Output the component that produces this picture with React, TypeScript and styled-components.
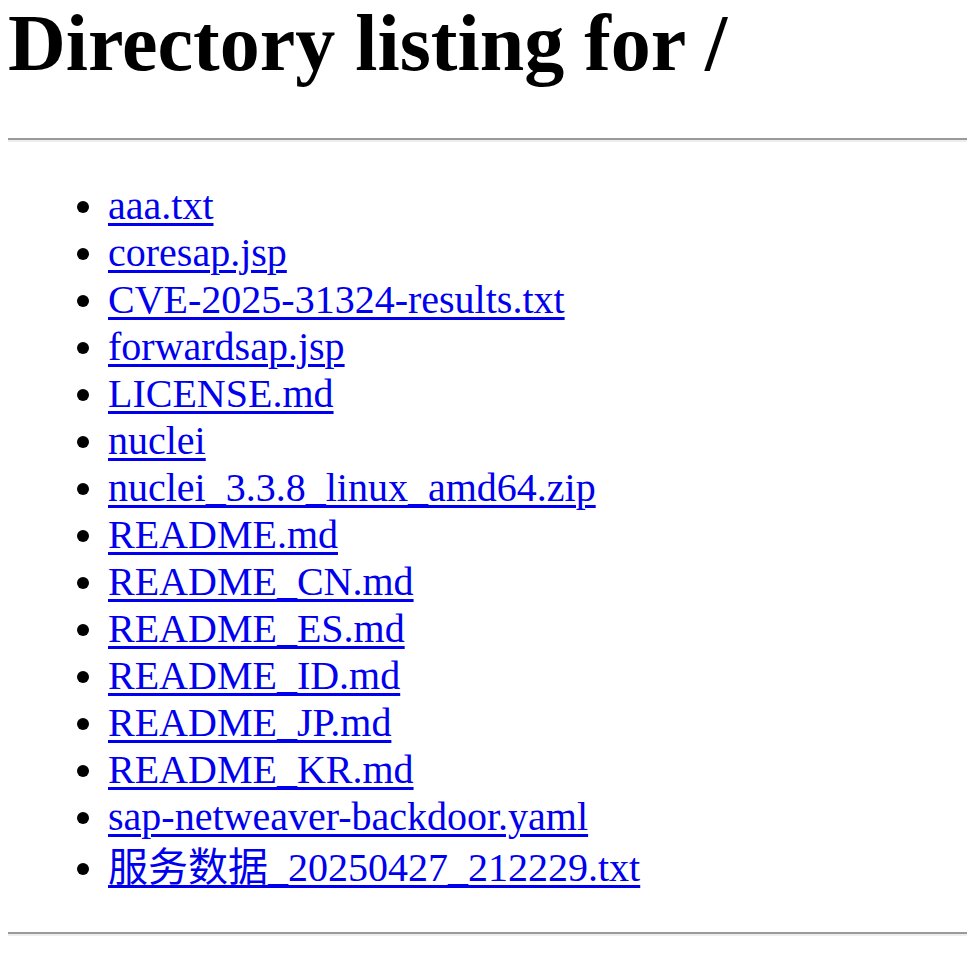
import styled, { createGlobalStyle } from 'styled-components'

const GlobalStyle = createGlobalStyle`
  html, body {
    background: #fff;
  }

  body {
    margin: 0 0 0 8px;
    font-family: "Liberation Serif", "Noto Sans CJK SC", serif;
    color: #000;
  }
`

const Page = styled.div`
  margin: 0;
`

const Title = styled.h1`
  font-size: 80px;
  line-height: 86px;
  font-weight: 700;
  margin: 0 0 52px;
`

const Rule = styled.hr`
  height: 0;
  margin: 20px 0;
  border: none;
  border-top: 2px solid #9a9a9a;
  border-bottom: 2px solid #eeeeee;
`

const FileList = styled.ul`
  margin: 40px 0 37px;
  padding-left: 100px;
  font-size: 40px;
  line-height: 47px;
`

// lines holding CJK glyphs come out taller in the fallback font
const FileItem = styled.li<{ $tall?: boolean }>`
  list-style: disc;
  line-height: ${(p) => (p.$tall ? '55px' : '47px')};
`

const FileLink = styled.a`
  color: #0000ee;
  text-decoration: underline;
  text-decoration-thickness: 3px;
  text-underline-offset: 4px;
`

const files = [
  'aaa.txt',
  'coresap.jsp',
  'CVE-2025-31324-results.txt',
  'forwardsap.jsp',
  'LICENSE.md',
  'nuclei',
  'nuclei_3.3.8_linux_amd64.zip',
  'README.md',
  'README_CN.md',
  'README_ES.md',
  'README_ID.md',
  'README_JP.md',
  'README_KR.md',
  'sap-netweaver-backdoor.yaml',
  '服务数据_20250427_212229.txt',
]

export default function App() {
  return (
    <Page>
      <GlobalStyle />
      <Title>Directory listing for /</Title>
      <Rule />
      <FileList>
        {files.map((name) => (
          <FileItem key={name} $tall={/[^\x00-\x7f]/.test(name)}>
            <FileLink href={`#${name}`}>{name}</FileLink>
          </FileItem>
        ))}
      </FileList>
      <Rule />
    </Page>
  )
}
